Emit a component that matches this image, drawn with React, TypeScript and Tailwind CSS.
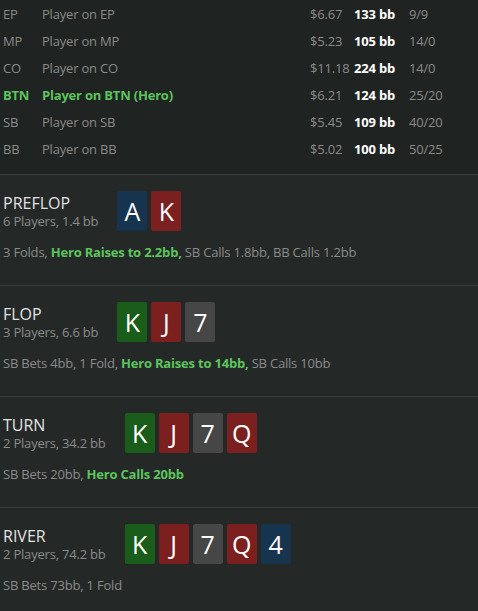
import React from 'react';

type Card = { rank: string; color: 'blue' | 'red' | 'green' | 'gray' };

const players = [
  { pos: 'EP', name: 'Player on EP', money: '$6.67', bb: '133 bb', ratio: '9/9' },
  { pos: 'MP', name: 'Player on MP', money: '$5.23', bb: '105 bb', ratio: '14/0' },
  { pos: 'CO', name: 'Player on CO', money: '$11.18', bb: '224 bb', ratio: '14/0' },
  { pos: 'BTN', name: 'Player on BTN (Hero)', money: '$6.21', bb: '124 bb', ratio: '25/20', hero: true },
  { pos: 'SB', name: 'Player on SB', money: '$5.45', bb: '109 bb', ratio: '40/20' },
  { pos: 'BB', name: 'Player on BB', money: '$5.02', bb: '100 bb', ratio: '50/25' },
];

const cardBg: Record<Card['color'], string> = {
  blue: 'bg-[#17344f]',
  red: 'bg-[#7b1f1f]',
  green: 'bg-[#1a5c1a]',
  gray: 'bg-[#464646]',
};

const board: Card[] = [
  { rank: 'K', color: 'green' },
  { rank: 'J', color: 'red' },
  { rank: '7', color: 'gray' },
  { rank: 'Q', color: 'red' },
  { rank: '4', color: 'blue' },
];

const streets: {
  title: string;
  info: string;
  cards: Card[];
  actions: { text: string; hero?: boolean }[];
}[] = [
  {
    title: 'PREFLOP',
    info: '6 Players, 1.4 bb',
    cards: [
      { rank: 'A', color: 'blue' },
      { rank: 'K', color: 'red' },
    ],
    actions: [
      { text: '3 Folds, ' },
      { text: 'Hero Raises to 2.2bb,', hero: true },
      { text: ' SB Calls 1.8bb, BB Calls 1.2bb' },
    ],
  },
  {
    title: 'FLOP',
    info: '3 Players, 6.6 bb',
    cards: board.slice(0, 3),
    actions: [
      { text: 'SB Bets 4bb, 1 Fold, ' },
      { text: 'Hero Raises to 14bb,', hero: true },
      { text: ' SB Calls 10bb' },
    ],
  },
  {
    title: 'TURN',
    info: '2 Players, 34.2 bb',
    cards: board.slice(0, 4),
    actions: [{ text: 'SB Bets 20bb, ' }, { text: 'Hero Calls 20bb', hero: true }],
  },
  {
    title: 'RIVER',
    info: '2 Players, 74.2 bb',
    cards: board,
    actions: [{ text: 'SB Bets 73bb, 1 Fold' }],
  },
];

function PlayingCard({ card }: { card: Card }) {
  return (
    <div
      className={`${cardBg[card.color]} w-[30px] h-[40px] rounded-[2px] flex items-center justify-center text-white text-[25px] leading-none`}
    >
      {card.rank}
    </div>
  );
}

export default function App() {
  return (
    <div
      className="w-[478px] h-[611px] overflow-hidden bg-[#242928] text-[13px] tracking-[-0.2px]"
      style={{ fontFamily: '"Open Sans", "Noto Sans", sans-serif' }}
    >
      <div className="bg-[#1f2321] border-b border-[#3a3e3d] h-[175px] pt-[1px]">
        {players.map((p) => (
          <div key={p.pos} className="flex items-center h-[27px]">
            <span className={`w-[42px] pl-[3px] ${p.hero ? 'text-[#5cc45c] font-bold' : 'text-[#8a8a8a]'}`}>
              {p.pos}
            </span>
            <span className={`w-[268px] ${p.hero ? 'text-[#5cc45c] font-bold' : 'text-[#8a8a8a]'}`}>
              {p.name}
            </span>
            <span className="w-[44px] text-[#8a8a8a]">{p.money}</span>
            <span className="w-[55px] text-white font-bold">{p.bb}</span>
            <span className="text-[#8a8a8a]">{p.ratio}</span>
          </div>
        ))}
      </div>
      {streets.map((s) => (
        <div key={s.title} className="h-[111px] border-b border-[#3a3e3d] pt-4 px-[3px]">
          <div className="flex items-center">
            <div className="mr-[19px]">
              <div className="text-[#e2e2e2] text-[16px] leading-5 tracking-normal">{s.title}</div>
              <div className="text-[#8a8a8a] leading-4">{s.info}</div>
            </div>
            <div className="flex gap-1">
              {s.cards.map((c, i) => (
                <PlayingCard key={i} card={c} />
              ))}
            </div>
          </div>
          <div className="mt-[12px] text-[#8a8a8a]">
            {s.actions.map((a, i) => (
              <span key={i} className={a.hero ? 'text-[#5cc45c] font-bold' : ''}>
                {a.text}
              </span>
            ))}
          </div>
        </div>
      ))}
    </div>
  );
}
